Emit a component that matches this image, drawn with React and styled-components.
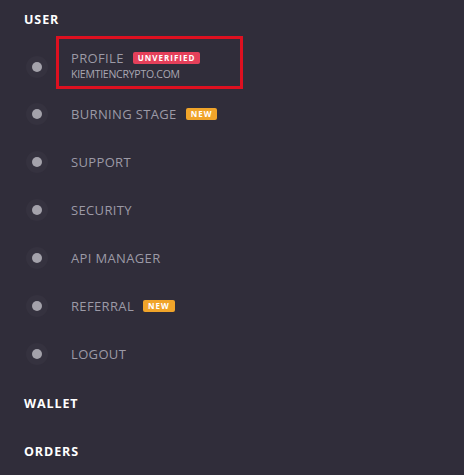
import React from 'react'
import styled, {createGlobalStyle} from 'styled-components'

const Global = createGlobalStyle`
    html, body {
        margin: 0;
        background: #302d3a;
    }
    body {
        font-family: "Open Sans", "Liberation Sans", sans-serif;
        -webkit-font-smoothing: antialiased;
    }
`;

const items = [
    {id: 1, title: "PROFILE", sub: "KIEMTIENCRYPTO.COM", badge: "UNVERIFIED", tone: "red", marked: true},
    {id: 2, title: "BURNING STAGE", badge: "NEW", tone: "orange"},
    {id: 3, title: "SUPPORT"},
    {id: 4, title: "SECURITY"},
    {id: 5, title: "API MANAGER"},
    {id: 6, title: "REFERRAL", badge: "NEW", tone: "orange"},
    {id: 7, title: "LOGOUT"},
]

export default function App() {
    const renderItems = () => {
        return items.map((item) => (
            <Row key={item.id} $tall={!!item.sub}>
                <Dot />
                <Content $sub={!!item.sub}>
                    {item.marked && <Highlight />}
                    <TitleLine>
                        <Title>{item.title}</Title>
                        {item.badge && <Badge $tone={item.tone}>{item.badge}</Badge>}
                    </TitleLine>
                    {item.sub && <Sub>{item.sub}</Sub>}
                </Content>
            </Row>
        ))
    }

    return (
        <Nav>
            <Global />
            <Heading>USER</Heading>
            <List>{renderItems()}</List>
            <Heading>WALLET</Heading>
            <Heading>ORDERS</Heading>
        </Nav>
    )
}

const Nav = styled.nav`
    display: flex;
    flex-direction: column;
    margin-top: -4px;
    width: 464px;
    height: 479px;
    overflow: hidden;
`;

const Heading = styled.h3`
    margin: 0;
    height: 48px;
    display: flex;
    align-items: center;
    padding-left: 24px;
    font-size: 12.5px;
    font-weight: 700;
    letter-spacing: 0.9px;
    color: #ffffff;
`;

const List = styled.ul`
    list-style: none;
    margin: 0;
    padding: 0 0 2px;
`;

const Row = styled.li`
    display: flex;
    align-items: center;
    height: ${(p) => (p.$tall ? '46px' : '48px')};
    padding-left: 26px;
`;

const Dot = styled.span`
    width: 22px;
    height: 22px;
    border-radius: 50%;
    background: #35323f;
    display: flex;
    align-items: center;
    justify-content: center;
    flex-shrink: 0;
&::after{
    content: "";
    width: 10px;
    height: 10px;
    border-radius: 50%;
    background: #a4a2ab;
}`;

const Content = styled.div`
    position: relative;
    margin-left: 11px;
    padding: 0 12px ${(p) => (p.$sub ? '4px' : '0')};
    display: flex;
    flex-direction: column;
`;

const Highlight = styled.span`
    position: absolute;
    left: -3px;
    top: -13px;
    width: 187px;
    height: 53px;
    box-sizing: border-box;
    border: 3px solid #dd1020;
    pointer-events: none;
`;

const TitleLine = styled.div`
    display: flex;
    align-items: center;
    height: 18px;
`;

const Title = styled.span`
    font-size: 13px;
    letter-spacing: 0.35px;
    color: #9c9aa6;
`;

const Badge = styled.span`
    margin-left: 9px;
    height: 12px;
    line-height: 12px;
    padding: 0 5px;
    border-radius: 2px;
    font-size: 8px;
    font-weight: 700;
    letter-spacing: 1px;
    color: #ffffff;
    background: ${(p) => (p.$tone === 'red' ? '#e5405a' : '#f0a42a')};
`;

const Sub = styled.span`
    font-size: 10.5px;
    line-height: 13px;
    margin-top: 1px;
    letter-spacing: -0.25px;
    color: #a9a7b2;
`;
